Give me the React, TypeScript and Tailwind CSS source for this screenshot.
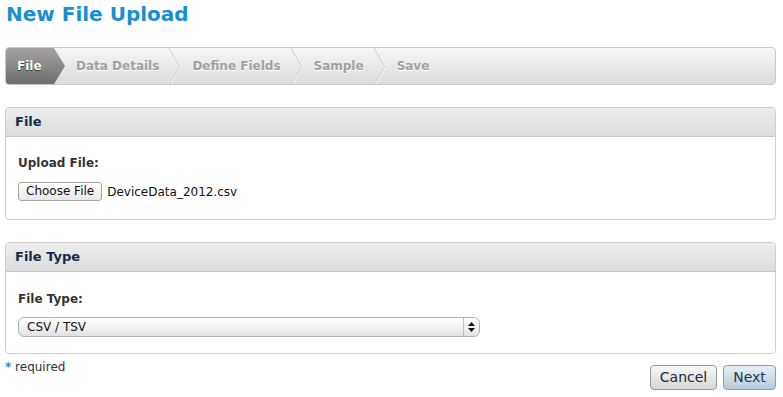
import React from 'react';

const verdana = { fontFamily: '"DejaVu Sans", Verdana, sans-serif' };

function Chevron() {
  return (
    <svg width="14" height="37" viewBox="0 0 14 37" className="shrink-0">
      <path d="M1 0 L12 18.5 L1 37" fill="none" stroke="#c3c3c3" strokeWidth="1" />
      <path d="M2 0 L13 18.5 L2 37" fill="none" stroke="#fafafa" strokeWidth="1" />
    </svg>
  );
}

function Steps() {
  const steps = ['Data Details', 'Define Fields', 'Sample', 'Save'];
  return (
    <div className="flex h-[38px] items-stretch rounded-[4px] border border-[#c8c8c8] bg-gradient-to-b from-[#f6f6f6] to-[#dcdcdc] overflow-hidden">
      <div className="flex items-stretch">
        <div className="flex w-[48px] items-center bg-gradient-to-b from-[#a3a3a3] to-[#6e6e6e] pl-[11px] text-[12px] font-bold text-white [text-shadow:0_1px_1px_#333]">
          File
        </div>
        <svg width="11" height="36" viewBox="0 0 11 36" className="shrink-0">
          <defs>
            <linearGradient id="ag" x1="0" y1="0" x2="0" y2="1">
              <stop offset="0" stopColor="#a3a3a3" />
              <stop offset="1" stopColor="#6e6e6e" />
            </linearGradient>
          </defs>
          <polygon points="0,0 11,18 0,36" fill="url(#ag)" />
        </svg>
      </div>
      <div className="flex items-center pl-[11px] text-[12px] font-bold text-[#a0a0a0]">
        {steps.map((s, i) => (
          <React.Fragment key={s}>
            <span className="[text-shadow:0_1px_0_#fff]">{s}</span>
            {i < steps.length - 1 && (
              <span className="ml-[9px] mr-[10px] flex">
                <Chevron />
              </span>
            )}
          </React.Fragment>
        ))}
      </div>
    </div>
  );
}

function Panel({ title, children }: { title: string; children: React.ReactNode }) {
  return (
    <div className="rounded-[4px] border border-[#cfcfcf] bg-white">
      <div className="flex h-[29px] items-center rounded-t-[4px] border-b border-[#c6c6c6] bg-gradient-to-b from-[#ececec] to-[#dedede] pl-[9px] text-[13px] font-bold text-[#142c4c]" style={verdana}>
        {title}
      </div>
      {children}
    </div>
  );
}

export default function App() {
  return (
    <div className="min-h-[397px] bg-white pl-[5px] pr-[7px] pt-[1px]" style={verdana}>
      <h1 className="pl-[1px] text-[20px] font-bold leading-[26px] text-[#1690d3]">New File Upload</h1>

      <div className="mt-[20px]">
        <Steps />
      </div>

      <div className="mt-[22px]">
        <Panel title="File">
          <div className="px-[12px] pb-[18px] pt-[17px]">
            <div className="text-[12px] font-bold text-[#333]">Upload File:</div>
            <div className="mt-[10px] flex items-center gap-[5px]" style={{ fontFamily: '"DejaVu Sans", sans-serif' }}>
              <button className="h-[19px] rounded-[3px] border border-[#a5a5a5] bg-gradient-to-b from-white to-[#e8e8e8] px-[7px] text-[12px] leading-[17px] text-[#111]">
                Choose File
              </button>
              <span className="text-[12px] text-[#111]">DeviceData_2012.csv</span>
            </div>
          </div>
        </Panel>
      </div>

      <div className="mt-[22px]">
        <Panel title="File Type">
          <div className="px-[12px] pb-[16px] pt-[18px]">
            <div className="text-[12px] font-bold text-[#333]">File Type:</div>
            <div className="mt-[9px] flex h-[20px] w-[462px] items-stretch rounded-[6px] border border-[#b2b2b2] bg-gradient-to-b from-white via-[#f2f2f2] to-[#e2e2e2] text-[12px] text-[#111]" style={{ fontFamily: '"DejaVu Sans", sans-serif' }}>
              <div className="flex flex-1 items-center pl-[8px]">CSV / TSV</div>
              <div className="flex w-[16px] flex-col items-center justify-center border-l border-[#c2c2c2]">
                <svg width="7" height="10" viewBox="0 0 7 10">
                  <polygon points="3.5,0 7,4 0,4" fill="#111" />
                  <polygon points="0,6 7,6 3.5,10" fill="#111" />
                </svg>
              </div>
            </div>
          </div>
        </Panel>
      </div>

      <div className="mt-[3px] flex items-start justify-between">
        <div className="pt-[1px] text-[12px] text-[#333]" style={{ fontFamily: '"DejaVu Sans", sans-serif' }}>
          <span className="font-bold text-[#1690d3]">*</span> required
        </div>
        <div className="mt-[8px] flex gap-[6px]">
          <button className="h-[25px] w-[67px] rounded-[4px] border border-[#9a9a9a] bg-gradient-to-b from-[#f8f8f8] to-[#d6d6d6] text-[14px] text-[#1e2a36]">
            Cancel
          </button>
          <button className="h-[25px] w-[53px] rounded-[4px] border border-[#8b9cab] bg-gradient-to-b from-[#e8f0f6] to-[#b7c9d8] text-[14px] text-[#1f3650]">
            Next
          </button>
        </div>
      </div>
    </div>
  );
}
